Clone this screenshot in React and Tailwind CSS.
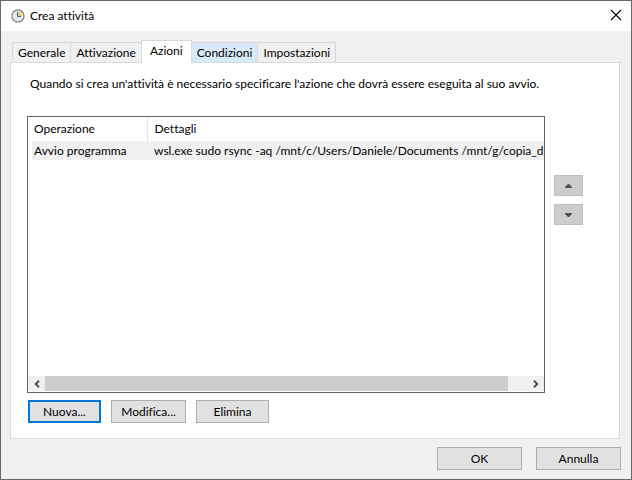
import { useState } from "react";

const TABS = ["Generale", "Attivazione", "Azioni", "Condizioni", "Impostazioni"];

const ACTIONS = [
  {
    type: "Avvio programma",
    details:
      "wsl.exe sudo rsync -aq /mnt/c/Users/Daniele/Documents /mnt/g/copia_d",
  },
];

const ClockIcon = () => (
  <svg width="14" height="14" viewBox="0 0 14 14" aria-hidden="true">
    <circle cx="7" cy="7" r="6" fill="#dde7ef" stroke="#858585" strokeWidth="1.4" />
    <path d="M7 7V2A5 5 0 0 1 12 7Z" fill="#f0cb82" />
    <circle cx="7" cy="7" r="4.8" fill="none" stroke="#f3f5f6" strokeWidth="0.6" />
    <path d="M6.5 3v4.5H10" fill="none" stroke="#50606f" strokeWidth="1" />
  </svg>
);

const TitleBar = () => (
  <header className="flex h-[30px] items-center bg-white pr-[9px] pl-[10px]">
    <ClockIcon />
    <h1 className="ml-[5px] flex-1">Crea attività</h1>
    <button type="button" aria-label="Chiudi" className="pb-[2px]">
      <svg width="12" height="12" viewBox="0 0 12 12" stroke="#000" strokeWidth="1.1">
        <path d="M1 1l10 10M11 1L1 11" />
      </svg>
    </button>
  </header>
);

const Tab = ({ label, active, onClick }) => (
  <button
    type="button"
    role="tab"
    aria-selected={active}
    onClick={onClick}
    className={
      active
        ? "relative -mr-px -mb-px h-[23px] border border-b-0 border-[#d9d9d9] bg-white px-[8px] pb-[2px]"
        : label === "Condizioni"
          ? "-mr-px h-5 border border-b-0 border-[#d9d9d9] bg-[#d8eaf9] px-[5px] hover:bg-[#d8eaf9]"
          : "-mr-px h-5 border border-b-0 border-[#d9d9d9] bg-[#f0f0f0] px-[5px] hover:bg-[#d8eaf9]"
    }
  >
    {label}
  </button>
);

const MoveButton = ({ label, path }) => (
  <button
    type="button"
    aria-label={label}
    className="flex h-[21px] w-[29px] items-center justify-center border border-[#bfbfbf] bg-[#cccccc]"
  >
    <svg width="7" height="4" viewBox="0 0 7 4" fill="#505050">
      <path d={path} />
    </svg>
  </button>
);

const ActionList = () => (
  <div className="flex min-w-0 flex-1 flex-col border border-[#646464] bg-white">
    <div className="flex-1 overflow-hidden pl-1">
      <table className="w-full table-fixed text-left whitespace-nowrap">
        <thead>
          <tr className="h-6">
            <th className="w-[115px] border-r border-[#e5e5e5] pl-[2px] font-normal">
              Operazione
            </th>
            <th className="pl-[7px] font-normal">Dettagli</th>
          </tr>
        </thead>
        <tbody>
          {ACTIONS.map((action) => (
            <tr key={action.details} className="h-[19px] bg-[#f0f0f0]">
              <td className="pl-[2px]">{action.type}</td>
              <td className="pl-[7px]">{action.details}</td>
            </tr>
          ))}
        </tbody>
      </table>
    </div>
    <div className="mb-px flex h-[15px] bg-[#f0f0f0]">
      <button
        type="button"
        aria-label="Scorri a sinistra"
        className="flex w-[17px] items-center justify-center"
      >
        <svg width="6" height="8" viewBox="0 0 6 8" fill="none" stroke="#505050" strokeWidth="2">
          <path d="M5 0.7L1.7 4L5 7.3" />
        </svg>
      </button>
      <div className="flex-1">
        <div className="h-full w-[96%] bg-[#cdcdcd]"></div>
      </div>
      <button
        type="button"
        aria-label="Scorri a destra"
        className="flex w-[17px] items-center justify-center"
      >
        <svg width="6" height="8" viewBox="0 0 6 8" fill="none" stroke="#505050" strokeWidth="2">
          <path d="M1 0.7L4.3 4L1 7.3" />
        </svg>
      </button>
    </div>
  </div>
);

const App = () => {
  const [activeTab, setActiveTab] = useState("Azioni");

  return (
    <div className="flex min-h-screen flex-col border border-[#666666] bg-[#f0f0f0] font-['Lato','Open_Sans',sans-serif] text-xs text-black [font-variant-ligatures:none]">
      <TitleBar />

      <main className="flex flex-1 flex-col pt-[9px] pr-[11px] pb-[9px] pl-[9px]">
        <div role="tablist" className="flex items-end pl-[2px]">
          {TABS.map((tab) => (
            <Tab
              key={tab}
              label={tab}
              active={tab === activeTab}
              onClick={() => setActiveTab(tab)}
            />
          ))}
        </div>

        <section className="flex flex-1 flex-col border border-[#d9d9d9] bg-white pt-[13px] pr-9 pb-[15px] pl-4">
          <p className="pl-[3px]">
            Quando si crea un'attività è necessario specificare l'azione che
            dovrà essere eseguita al suo avvio.
          </p>

          <div className="mt-6 flex flex-1 gap-[9px]">
            <ActionList />
            <div className="flex flex-col gap-2 pt-[59px]">
              <MoveButton label="Sposta su" path="M0 4V3L3 0h1l3 3v1Z" />
              <MoveButton label="Sposta giù" path="M0 0v1l3 3h1l3-3V0Z" />
            </div>
          </div>

          <div className="mt-[7px] flex gap-[10px] pl-px">
            <button
              type="button"
              className="h-[23px] w-[73px] border-2 border-[#0078d7] bg-[#e1e1e1]"
            >
              Nuova...
            </button>
            <button
              type="button"
              className="h-[23px] w-[75px] border border-[#adadad] bg-[#e1e1e1]"
            >
              Modifica...
            </button>
            <button
              type="button"
              className="h-[23px] w-[73px] border border-[#adadad] bg-[#e1e1e1]"
            >
              Elimina
            </button>
          </div>
        </section>

        <footer className="-mr-px mt-2 flex justify-end gap-[14px]">
          <button
            type="button"
            className="h-[23px] w-[85px] border border-[#adadad] bg-[#e1e1e1]"
          >
            OK
          </button>
          <button
            type="button"
            className="h-[23px] w-[85px] border border-[#adadad] bg-[#e1e1e1]"
          >
            Annulla
          </button>
        </footer>
      </main>
    </div>
  );
};

export default App;
